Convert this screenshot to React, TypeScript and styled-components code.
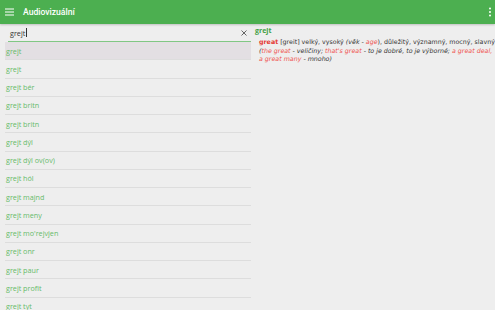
import React from "react";
import styled, { createGlobalStyle } from "styled-components";

const Global = createGlobalStyle`
  html, body {
    margin: 0;
    padding: 0;
    background: #eeeeee;
    font-family: "Open Sans", "DejaVu Sans", sans-serif;
    overflow: hidden;
  }
`;

const Page = styled.div`
  width: 495px;
  height: 310px;
  display: flex;
  flex-direction: column;
  overflow: hidden;
`;

const Header = styled.header`
  height: 24px;
  flex: none;
  background: #4caf50;
  display: flex;
  align-items: center;
  padding: 0 3px 0 5px;
  box-shadow: 0 1px 2px rgba(0, 0, 0, 0.2);
  color: #fff;
`;

const Title = styled.div`
  margin-left: 9px;
  font-family: Roboto, "Open Sans", sans-serif;
  font-weight: 500;
  font-size: 8.6px;
  flex: 1;
`;

const Body = styled.div`
  flex: 1;
  display: grid;
  grid-template-columns: 253px 1fr;
  min-height: 0;
`;

const Left = styled.div`
  padding: 0 2px 0 5px;
  display: flex;
  flex-direction: column;
`;

const SearchRow = styled.div`
  height: 17px;
  margin-left: 3px;
  display: flex;
  align-items: center;
  border-bottom: 1px solid #81c784;
  padding: 0 4px 0 2px;
`;

const SearchText = styled.div`
  flex: 1;
  font-size: 7.2px;
  color: #333;
  display: flex;
  align-items: center;
`;

const Caret = styled.span`
  display: inline-block;
  width: 1px;
  height: 9px;
  background: #333;
  margin-left: 0.5px;
`;

const Row = styled.div<{ $active?: boolean }>`
  height: 17.25px;
  border-bottom: 1px solid #dddddd;
  background: ${(p) => (p.$active ? "#e3dfe3" : "transparent")};
  display: flex;
  align-items: center;
  padding-left: 1px;
  font-size: 7.2px;
  color: #66bb6a;
  flex: none;
`;

const Right = styled.div`
  padding: 1px 0 0 2px;
  min-width: 0;
`;

const Word = styled.div`
  font-weight: 700;
  font-size: 7px;
  color: #43a047;
  height: 12px;
  line-height: 12px;
`;

const Def = styled.div`
  margin: 1px 0 0 4px;
  font-family: "DejaVu Sans", sans-serif;
  font-size: 6.3px;
  line-height: 8.5px;
  color: #333;
`;

const Line = styled.div`
  white-space: nowrap;
`;

const Head = styled.b`
  color: #e53935;
`;

const It = styled.i<{ $red?: boolean }>`
  color: ${(p) => (p.$red ? "#ef5350" : "#333")};
`;

const words = [
  "grejt",
  "grejt bér",
  "grejt britn",
  "grejt britn",
  "grejt dýl",
  "grejt dýl ov(ov)",
  "grejt hól",
  "grejt majnd",
  "grejt meny",
  "grejt mo'rejvjen",
  "grejt onr",
  "grejt paur",
  "grejt profit",
  "grejt tyt",
];

const Menu = () => (
  <svg width="9" height="8" viewBox="0 0 9 8">
    <rect x="0" y="0.5" width="9" height="1" fill="#fff" />
    <rect x="0" y="3.5" width="9" height="1" fill="#fff" />
    <rect x="0" y="6.5" width="9" height="1" fill="#fff" />
  </svg>
);

const More = () => (
  <svg width="4" height="10" viewBox="0 0 4 10">
    <circle cx="2" cy="1.5" r="1" fill="#fff" />
    <circle cx="2" cy="5" r="1" fill="#fff" />
    <circle cx="2" cy="8.5" r="1" fill="#fff" />
  </svg>
);

const Clear = () => (
  <svg width="6" height="6" viewBox="0 0 6 6">
    <path d="M0.5 0.5L5.5 5.5M5.5 0.5L0.5 5.5" stroke="#555" strokeWidth="0.9" />
  </svg>
);

export default function App() {
  return (
    <Page>
      <Global />
      <Header>
        <Menu />
        <Title>Audiovizuální</Title>
        <More />
      </Header>
      <Body>
        <Left>
          <SearchRow>
            <SearchText>
              grejt
              <Caret />
            </SearchText>
            <Clear />
          </SearchRow>
          <Row $active>grejt</Row>
          {words.map((w, i) => (
            <Row key={i}>{w}</Row>
          ))}
        </Left>
        <Right>
          <Word>grejt</Word>
          <Def>
            <Line>
              <Head>great</Head> [greit] velký, vysoký <It>(věk - </It>
              <It $red>age</It>), důležitý, významný, mocný, slavný
            </Line>
            <Line>
              <It>
                (<It $red>the great</It> - veličiny; <It $red>that's great</It> - to je dobré, to je
                výborné; <It $red>a great deal,</It>
              </It>
            </Line>
            <Line>
              <It>
                <It $red>a great many</It> - mnoho)
              </It>
            </Line>
          </Def>
        </Right>
      </Body>
    </Page>
  );
}
